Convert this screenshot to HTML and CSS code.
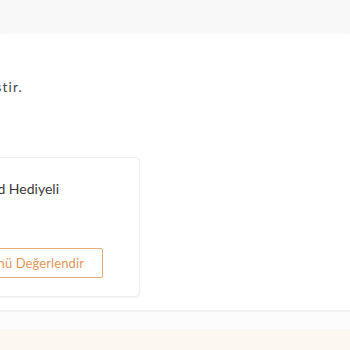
FILE: index.html
```html
<!DOCTYPE html>
<html lang="tr">
<head>
<meta charset="utf-8">
<link rel="stylesheet" href="styles.css">
</head>
<body>
<header class="topbar"></header>
<main class="main">
  <div class="note"><span>Yorumunuz onaylandıktan sonra puanınız hesabınıza eklenmiştir.</span></div>
  <section class="card">
    <div class="card-title"><span>Ürün Yorumlarına Özel Kargo Bedava ve 1 Ad Hediyeli</span></div>
    <button class="rate-btn" type="button"><span>Ürünü Değerlendir</span></button>
  </section>
</main>
<div class="divider"></div>
<div class="band"></div>
<footer class="promo"></footer>
</body>
</html>
```
FILE: styles.css
```css
html, body {
  margin: 0;
  padding: 0;
  background: #ffffff;
  overflow: hidden;
}
body {
  font-family: "Lato", "Open Sans", sans-serif;
  color: #3d3d3d;
  width: 350px;
  height: 350px;
}
.topbar {
  height: 33px;
  background: #f8f8f8;
  box-shadow: 0 1px 3px rgba(0,0,0,0.025);
}
.main {
  padding-top: 46px;
}
.note {
  width: 23px;
  display: flex;
  justify-content: flex-end;
  white-space: nowrap;
  font-size: 13.5px;
  line-height: 16px;
  letter-spacing: 1.2px;
  color: #444;
}
.card {
  margin-top: 62px;
  margin-left: -100px;
  width: 240px;
  height: 140px;
  box-sizing: border-box;
  padding: 22px 20px 0;
  background: #fff;
  border: 1px solid #efefef;
  border-radius: 5px;
  box-shadow: 0 1px 3px rgba(0,0,0,0.05);
}
.card-title {
  width: 138px;
  display: flex;
  justify-content: flex-end;
  white-space: nowrap;
  font-size: 14px;
  line-height: 18px;
  color: #3a3a3a;
  letter-spacing: 0;
}
.rate-btn {
  margin-top: 50px;
  width: 182px;
  height: 30px;
  box-sizing: border-box;
  display: flex;
  align-items: center;
  justify-content: flex-end;
  padding: 0 18px 0 0;
  white-space: nowrap;
  background: #fff;
  border: 1.5px solid #e9ad7c;
  border-radius: 2px;
  font-family: inherit;
  font-size: 13px;
  letter-spacing: 0.1px;
  color: #e3965a;
}
.divider {
  margin-top: 13px;
  height: 2px;
  background: #f2f2f2;
}
.band {
  height: 17px;
  background: #fcfcfc;
}
.promo {
  height: 30px;
  background: #fdf7f2;
}
```
